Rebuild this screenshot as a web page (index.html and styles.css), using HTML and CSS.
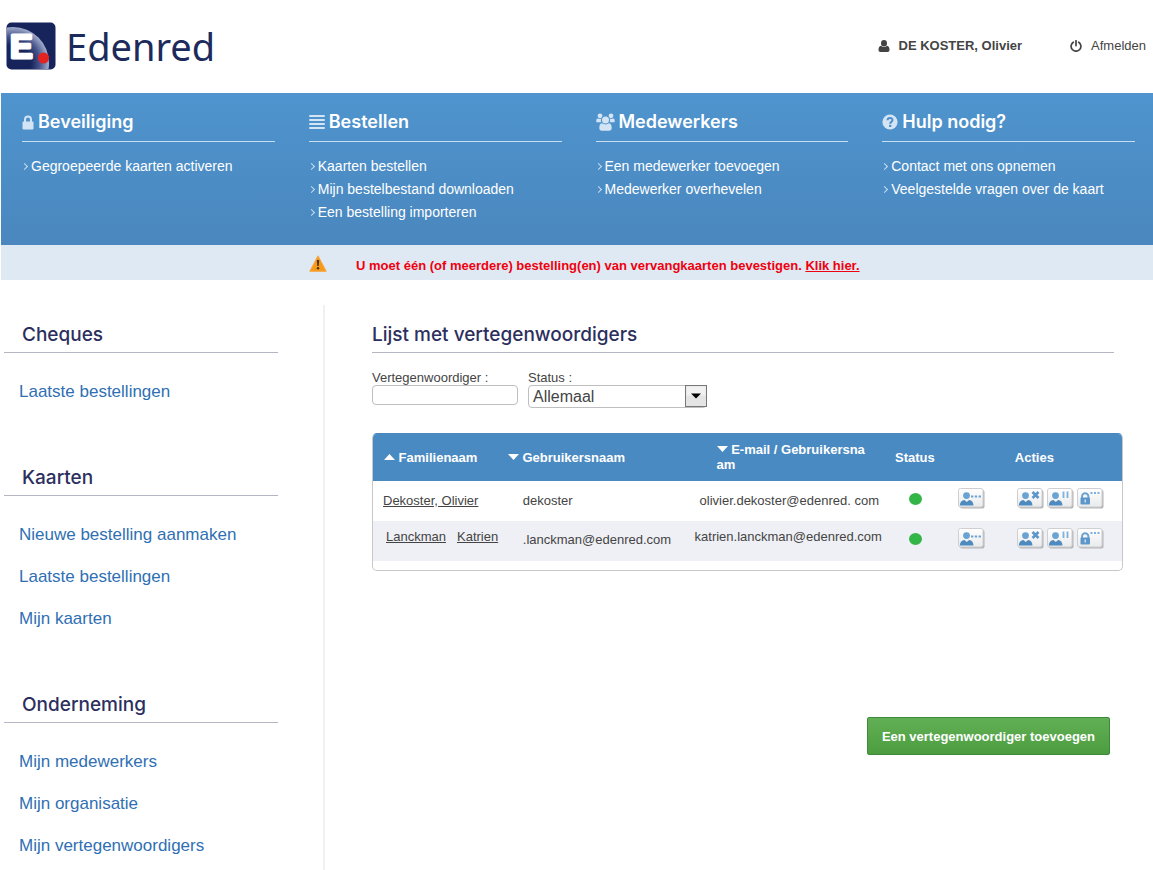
FILE: index.html
```html
<!DOCTYPE html>
<html lang="nl">
<head>
<meta charset="utf-8">
<meta name="viewport" content="width=device-width, initial-scale=1">
<title>Edenred - Lijst met vertegenwoordigers</title>
<link rel="stylesheet" href="styles.css">
</head>
<body>
<svg class="sprite" aria-hidden="true">
  <defs>
    <radialGradient id="swoosh" gradientUnits="userSpaceOnUse" cx="7" cy="41" r="36">
      <stop offset="0.5" stop-color="#17245c"/>
      <stop offset="0.75" stop-color="#47558c"/>
      <stop offset="1" stop-color="#a3adcb"/>
    </radialGradient>
    <clipPath id="mark-clip"><rect x="1" y="1" width="48" height="46" rx="5"/></clipPath>
    <linearGradient id="tile" x1="0" y1="0" x2="0" y2="1">
      <stop offset="0" stop-color="#ffffff"/>
      <stop offset="1" stop-color="#e9eaec"/>
    </linearGradient>
  </defs>
  <symbol id="box" viewBox="0 0 27 21">
    <rect x="2" y="2" width="24.5" height="18.5" rx="2" fill="#b4b4b6"/>
    <rect x="0.5" y="0.5" width="24.5" height="18.5" rx="2" fill="url(#tile)" stroke="#cfcfd1"/>
  </symbol>
  <symbol id="person" viewBox="0 0 27 21">
    <circle cx="8.5" cy="7.6" r="3.4" fill="#6aa3d2"/>
    <path d="M1.800 17.500c.2-3.600 2-5 4.700-5.500l2.300 2 2.300-2c2.700.5 4.200 1.900 4.400 5.500z" fill="#4d8abf"/>
  </symbol>
  <symbol id="act-more" viewBox="0 0 27 21">
    <use href="#box"/><use href="#person"/>
    <path d="M13 7.500h2.300v2H13zM16.800 7.500h2.300v2h-2.300zM20.600 7.500h2.300v2h-2.300z" fill="#6aa3d2"/>
  </symbol>
  <symbol id="act-delete" viewBox="0 0 27 21">
    <use href="#box"/><use href="#person"/>
    <path d="M15.500 4l6 6M21.500 4l-6 6" stroke="#5d97c9" stroke-width="2.600"/>
  </symbol>
  <symbol id="act-pause" viewBox="0 0 27 21">
    <use href="#box"/><use href="#person"/>
    <path d="M16.500 3.500v6.500M20.500 3.500v6.500" stroke="#7fb0da" stroke-width="1.800"/>
  </symbol>
  <symbol id="act-lock" viewBox="0 0 27 21">
    <use href="#box"/>
    <path d="M5 10V8.500a3.200 3.200 0 0 1 6.400 0V10" fill="none" stroke="#6aa3d2" stroke-width="1.900"/>
    <rect x="3.500" y="9.500" width="9.500" height="7" rx="1" fill="#5d97c9"/>
    <path d="M7.500 11.500h1.500v3H7.500z" fill="#c9def0"/>
    <path d="M13.500 4h2v2h-2zM17 4h2v2h-2zM20.500 4h2v2h-2z" fill="#7fb0da"/>
  </symbol>
</svg>

<header class="top">
  <a class="brand" href="#" aria-label="Edenred">
    <svg class="brand-mark" viewBox="0 0 50 48" aria-hidden="true">
      <rect x="0.500" y="0.500" width="49" height="47" rx="5" fill="#17245c"/>
      <circle cx="7" cy="41" r="36" fill="url(#swoosh)" clip-path="url(#mark-clip)"/>
      <text class="brand-letter" x="4" y="36">E</text>
      <circle cx="37.500" cy="36" r="5.500" fill="#e2231f"/>
    </svg>
    <span class="brand-name">Edenred</span>
  </a>
  <div class="account">
    <span class="user">
      <svg class="user-icon" viewBox="0 0 12 12" aria-hidden="true"><ellipse cx="6" cy="3.200" rx="3" ry="3.200"/><path d="M3 5.800C1 6.200.5 8 .5 10c0 1.200.8 2 2 2h7c1.200 0 2-.8 2-2 0-2-.5-3.800-2.500-4.200-1.700 1.600-4.300 1.600-6 0z"/></svg>
      DE KOSTER, Olivier
    </span>
    <a class="logout" href="#">
      <svg class="logout-icon" viewBox="0 0 12 12" aria-hidden="true"><path d="M3.300 2.200a4.900 4.900 0 1 0 5.400 0M6 .6v5" fill="none" stroke="currentColor" stroke-width="1.700" stroke-linecap="round"/></svg>
      Afmelden
    </a>
  </div>
</header>

<nav class="menu">
  <section class="menu-group">
    <h2 class="menu-title"><svg class="lock-icon" viewBox="0 0 12 15" aria-hidden="true"><path d="M3 7V4.500a3 3 0 0 1 6 0V7" fill="none" stroke="currentColor" stroke-width="2"/><rect x="0.500" y="6.500" width="11" height="8" rx="1" fill="currentColor"/></svg>Beveiliging</h2>
    <ul class="menu-list"><li><a href="#">Gegroepeerde kaarten activeren</a></li></ul>
  </section>
  <section class="menu-group">
    <h2 class="menu-title"><svg class="wide-icon" viewBox="0 0 16 16" aria-hidden="true"><path d="M1 2h14M1 6h14M1 10h14M1 14h14" stroke="currentColor" stroke-width="2" stroke-linecap="round"/></svg>Bestellen</h2>
    <ul class="menu-list"><li><a href="#">Kaarten bestellen</a></li><li><a href="#">Mijn bestelbestand downloaden</a></li><li><a href="#">Een bestelling importeren</a></li></ul>
  </section>
  <section class="menu-group">
    <h2 class="menu-title"><svg class="group-icon" viewBox="0 0 19 18" aria-hidden="true"><g fill="currentColor"><circle cx="4" cy="2.800" r="2.400"/><circle cx="15" cy="2.800" r="2.400"/><path d="M.3 9V7.500C.3 6 1 5.200 2.300 5.500c1 .6 2.300.6 3.200 0-.9 1.500-.7 2.800-.2 3.800H1.500C.8 9.300.3 9.200.3 9zM18.700 9V7.500c0-1.500-.7-2.300-2-2-1 .6-2.300.6-3.200 0 .9 1.500.7 2.800.2 3.800h3.800c.7 0 1.200-.1 1.200-.3z"/><circle cx="9.500" cy="7" r="3.500"/><path d="M6 10.300c-2 .4-2.700 2.300-2.700 4.700 0 1.700 1 2.700 2.500 2.700h7.400c1.500 0 2.500-1 2.500-2.700 0-2.400-.7-4.300-2.700-4.700-2 1.500-5 1.500-7 0z"/></g></svg>Medewerkers</h2>
    <ul class="menu-list"><li><a href="#">Een medewerker toevoegen</a></li><li><a href="#">Medewerker overhevelen</a></li></ul>
  </section>
  <section class="menu-group">
    <h2 class="menu-title"><svg class="wide-icon" viewBox="0 0 16 16" aria-hidden="true"><circle cx="8" cy="8" r="7.600" fill="currentColor"/><path d="M5.500 6.200C5.700 3.300 10.500 3.300 10.500 6c0 1.700-2.300 1.700-2.300 3.700" fill="none" stroke="#4e8fc8" stroke-width="2"/><path d="M7.100 10.800h2.200V13H7.100z" fill="#4e8fc8"/></svg>Hulp nodig?</h2>
    <ul class="menu-list"><li><a href="#">Contact met ons opnemen</a></li><li><a href="#">Veelgestelde vragen over de kaart</a></li></ul>
  </section>
</nav>

<div class="alert" role="alert">
  <svg class="alert-icon" viewBox="0 0 18 17" aria-hidden="true"><path d="M9 .8l8.200 15.500H.8z" fill="#f79a1c" stroke="#f5a742" stroke-linejoin="round"/><path d="M7.800 5h2.400l-.5 6H8.300z" fill="#4a3512"/><circle cx="9" cy="13.200" r="1.200" fill="#4a3512"/></svg>
  <p class="alert-text">U moet één (of meerdere) bestelling(en) van vervangkaarten bevestigen. <a href="#">Klik hier.</a></p>
</div>

<div class="layout">
  <aside class="sidebar">
    <section class="side-group">
      <h2 class="side-title">Cheques</h2>
      <ul class="side-list"><li><a href="#">Laatste bestellingen</a></li></ul>
    </section>
    <section class="side-group">
      <h2 class="side-title">Kaarten</h2>
      <ul class="side-list"><li><a href="#">Nieuwe bestelling aanmaken</a></li><li><a href="#">Laatste bestellingen</a></li><li><a href="#">Mijn kaarten</a></li></ul>
    </section>
    <section class="side-group">
      <h2 class="side-title">Onderneming</h2>
      <ul class="side-list"><li><a href="#">Mijn medewerkers</a></li><li><a href="#">Mijn organisatie</a></li><li><a href="#">Mijn vertegenwoordigers</a></li></ul>
    </section>
  </aside>

  <main class="content">
    <h1 class="page-title">Lijst met vertegenwoordigers</h1>

    <form class="filters">
      <div class="field field-name">
        <label for="rep">Vertegenwoordiger :</label>
        <input class="text-box" id="rep" type="text">
      </div>
      <div class="field field-status">
        <label for="status">Status :</label>
        <div class="select-wrap">
          <select class="select-box" id="status"><option>Allemaal</option></select>
          <svg class="select-arrow" viewBox="0 0 22 22" aria-hidden="true"><rect x="0.500" y="0.500" width="21" height="21" fill="#e4e4e4" stroke="#777"/><path d="M1.500 1.500h19v9h-19z" fill="#f1f1f1"/><path d="M6 8.500h10l-5 5z" fill="#000"/></svg>
        </div>
      </div>
    </form>

    <div class="grid-frame">
      <table class="grid">
        <colgroup><col class="c-name"><col class="c-user"><col class="c-mail"><col class="c-status"><col class="c-more"><col class="c-actions"></colgroup>
        <thead>
          <tr>
            <th class="h-name"><svg class="sort" viewBox="0 0 11 6" aria-hidden="true"><path d="M0 6l5.500-6L11 6z"/></svg> Familienaam</th>
            <th><svg class="sort" viewBox="0 0 11 6" aria-hidden="true"><path d="M0 0l5.500 6L11 0z"/></svg> Gebruikersnaam</th>
            <th class="h-mail"><svg class="sort" viewBox="0 0 11 6" aria-hidden="true"><path d="M0 0l5.500 6L11 0z"/></svg> E-mail / Gebruikersna<br>am</th>
            <th>Status</th>
            <th></th>
            <th>Acties</th>
          </tr>
        </thead>
        <tbody>
          <tr>
            <td class="d-name"><a href="#">Dekoster, Olivier</a></td>
            <td class="d-user">dekoster</td>
            <td class="d-mail">olivier.dekoster@edenred. com</td>
            <td class="d-status"><span class="dot" role="img" aria-label="Actief"></span></td>
            <td class="d-more"><button class="act" type="button" aria-label="Details"><svg class="act-icon" viewBox="0 0 27 21"><use href="#act-more"/></svg></button></td>
            <td class="d-actions"><div class="acts">
              <button class="act" type="button" aria-label="Verwijderen"><svg class="act-icon" viewBox="0 0 27 21"><use href="#act-delete"/></svg></button>
              <button class="act" type="button" aria-label="Onderbreken"><svg class="act-icon" viewBox="0 0 27 21"><use href="#act-pause"/></svg></button>
              <button class="act" type="button" aria-label="Wachtwoord"><svg class="act-icon" viewBox="0 0 27 21"><use href="#act-lock"/></svg></button>
            </div></td>
          </tr>
          <tr class="alt">
            <td class="d-name"><span class="names"><a href="#">Lanckman</a><a href="#">Katrien</a></span></td>
            <td class="d-user">.lanckman@edenred.com</td>
            <td class="d-mail">katrien.lanckman@edenred.com</td>
            <td class="d-status"><span class="dot" role="img" aria-label="Actief"></span></td>
            <td class="d-more"><button class="act" type="button" aria-label="Details"><svg class="act-icon" viewBox="0 0 27 21"><use href="#act-more"/></svg></button></td>
            <td class="d-actions"><div class="acts">
              <button class="act" type="button" aria-label="Verwijderen"><svg class="act-icon" viewBox="0 0 27 21"><use href="#act-delete"/></svg></button>
              <button class="act" type="button" aria-label="Onderbreken"><svg class="act-icon" viewBox="0 0 27 21"><use href="#act-pause"/></svg></button>
              <button class="act" type="button" aria-label="Wachtwoord"><svg class="act-icon" viewBox="0 0 27 21"><use href="#act-lock"/></svg></button>
            </div></td>
          </tr>
        </tbody>
      </table>
    </div>

    <div class="footer-actions"><button class="primary" type="button">Een vertegenwoordiger toevoegen</button></div>
  </main>
</div>
</body>
</html>
```

FILE: styles.css
```css
* { box-sizing: border-box; }

body {
  margin: 0;
  padding-left: 1px;
  min-height: 100vh;
  display: flex;
  flex-direction: column;
  background: #fff;
  color: #444;
  font-family: "Liberation Sans", Arial, sans-serif;
  font-size: 13px;
}

h1, h2, p, ul { margin: 0; padding: 0; }
ul { list-style: none; }
a { color: inherit; text-decoration: none; }
svg { display: block; flex: none; }
.sprite { position: absolute; width: 0; height: 0; }

/* Header */
.top {
  display: flex;
  justify-content: space-between;
  align-items: center;
  min-height: 93px;
  padding: 0 7px 2px 5px;
}
.brand { display: flex; align-items: center; gap: 10px; color: #1c2a5c; }
.brand-mark { width: 50px; height: 48px; }
.brand-letter {
  font: bold 34px "Liberation Sans", Arial, sans-serif;
  fill: #fff;
  stroke: #fff;
  stroke-width: 3px;
  stroke-linejoin: round;
}
.brand-name { font-family: "Noto Sans", sans-serif; font-size: 38px; line-height: 48px; }
.account { display: flex; gap: 48px; line-height: 16px; }
.user, .logout { display: flex; align-items: center; gap: 9px; }
.user { font-weight: bold; }
.user-icon, .logout-icon { width: 12px; height: 12px; fill: #444; }

/* Blue menu */
.menu {
  display: grid;
  grid-template-columns: repeat(4, 1fr);
  gap: 34px;
  min-height: 152px;
  padding: 15px 18px 20px 21px;
  background: linear-gradient(#4f94ce, #4a87be);
  color: #fff;
}
.menu-title {
  display: flex;
  align-items: center;
  gap: 4px;
  padding-bottom: 5px;
  border-bottom: 1px solid #c5def2;
  font: 600 18px/28px Inter, sans-serif;
}
.menu-title svg { color: #d3e4f4; }
.lock-icon { width: 12px; height: 15px; }
.wide-icon { width: 16px; height: 16px; }
.group-icon { width: 19px; height: 18px; }
.menu-list { padding-top: 13px; font-size: 14px; line-height: 23px; }
.menu-list li { display: flex; align-items: center; gap: 4px; }
.menu-list li::before {
  content: "";
  width: 4px;
  height: 4px;
  border: solid #c5def2;
  border-width: 1px 1px 0 0;
  transform: rotate(45deg);
}

/* Warning bar */
.alert {
  display: flex;
  align-items: center;
  gap: 29px;
  min-height: 35px;
  padding: 2px 0 0 308px;
  background: #dfe9f3;
  color: #f0000f;
}
.alert-icon { width: 18px; height: 17px; }
.alert-text { padding-top: 4px; line-height: 16px; font-weight: bold; }
.alert-text a { text-decoration: underline; }

/* Columns */
.layout { display: flex; flex: 1; margin-top: 25px; }
.sidebar { flex: none; width: 324px; padding: 15px 45px 0 3px; border-right: 2px solid #f0f1f4; }
.side-group + .side-group { margin-top: 50px; }
.side-title, .page-title {
  padding-bottom: 3px;
  border-bottom: 1px solid #b4b6c4;
  color: #2c2f5e;
  font: 500 19px/29px Inter, sans-serif;
}
.side-title { padding-left: 18px; }
.side-list { padding: 18px 0 0 15px; color: #2f6fb3; font-size: 17px; line-height: 42px; }

.content { flex: 1; min-width: 0; padding: 15px 30px 20px 47px; }
.page-title { margin-right: 9px; }

.filters { display: flex; align-items: flex-start; gap: 10px; margin-top: 17px; }
.field { display: flex; flex-direction: column; line-height: 15px; }
.field-name { width: 146px; }
.field-status { width: 179px; }
.text-box, .select-box {
  width: 100%;
  margin: 0;
  border: 1px solid #bfbfbf;
  border-radius: 4px;
  background: #fff;
  color: #444;
  font: 16px "Liberation Sans", Arial, sans-serif;
}
.text-box { height: 20px; padding: 0 4px; }
.select-box { display: block; height: 23px; padding: 0 26px 0 4px; appearance: none; }
.select-wrap { position: relative; }
.select-arrow { position: absolute; top: 0; right: 0; width: 22px; height: 22px; pointer-events: none; }

/* Table */
.grid-frame {
  margin-top: 25px;
  padding-bottom: 9px;
  overflow: hidden;
  border: 1px solid #c8c8c8;
  border-top-color: #4a89c0;
  border-radius: 5px;
}
.grid { width: 100%; border-collapse: collapse; table-layout: fixed; }
.c-name { width: 18%; }
.c-user { width: 24%; }
.c-mail { width: 27.7%; }
.c-status { width: 8%; }
.c-more { width: 8%; }
.grid th {
  height: 47px;
  padding: 0 0 1px;
  background: #4a8ac2;
  color: #fff;
  line-height: 15px;
  text-align: left;
  white-space: nowrap;
}
.grid .h-name { padding-left: 11px; }
.grid .h-mail { padding-left: 29px; }
.sort { display: inline-block; width: 11px; height: 6px; vertical-align: 2px; fill: #fff; }
.grid td { height: 40px; padding: 0; white-space: nowrap; line-height: 16px; }
.grid td a { text-decoration: underline; }
.alt { background: #eff0f5; }
.grid .d-name { padding-left: 10px; }
.grid .d-user { padding-left: 15px; }
.grid .d-mail { padding-left: 12px; }
.grid .d-status { padding: 0 0 5px 14px; }
.grid .d-more { padding: 0 0 5px 3px; }
.grid .d-actions { padding: 0 0 5px 2px; }
.grid .alt .d-name { padding: 0 0 8px 13px; }
.grid .alt .d-user { padding-bottom: 3px; }
.grid .alt .d-mail { padding: 0 0 8px 7px; }
.names { display: flex; gap: 11px; }
.dot { display: block; width: 13px; height: 12px; border-radius: 50%; background: #33b548; }
.acts { display: flex; gap: 3px; }
.act { display: block; padding: 0; border: 0; background: none; }
.act-icon { width: 27px; height: 21px; }

.footer-actions { display: flex; justify-content: flex-end; margin: 146px 13px 0 0; }
.primary {
  height: 38px;
  padding: 0 14px;
  border: 1px solid #3f8a3a;
  border-radius: 2px;
  background: linear-gradient(#62b055, #4c9c40);
  color: #fff;
  font: bold 13px "Liberation Sans", Arial, sans-serif;
}
```
